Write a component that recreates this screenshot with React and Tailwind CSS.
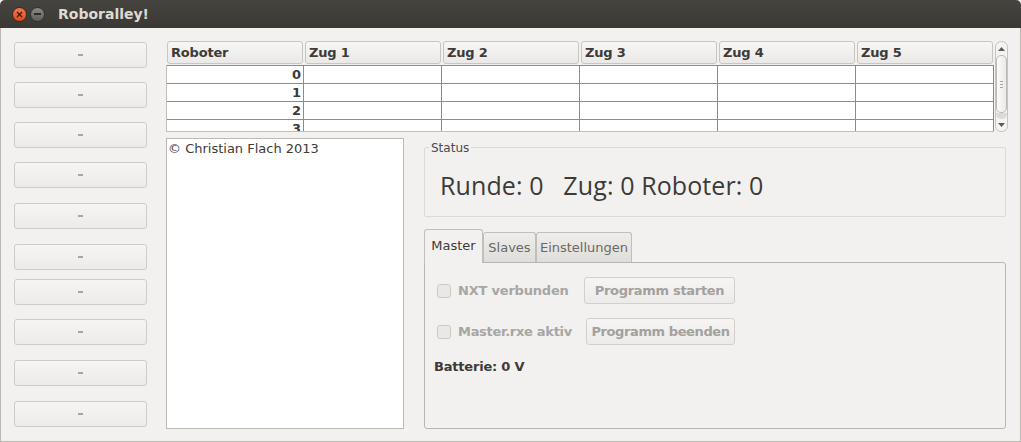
const ubuntu = { fontFamily: '"DejaVu Sans", "Open Sans", sans-serif' }

const leftGaps = ["mt-[1px]", "mt-[14px]", "mt-[14px]", "mt-[14px]", "mt-[15px]", "mt-[15px]", "mt-[9px]", "mt-[14px]", "mt-[15px]", "mt-[15px]"]

function SideButton({ cls }) {
  return (
    <div className={`${cls} h-[26px] w-[133px] rounded-[3px] border border-[#cfccc8] bg-gradient-to-b from-[#f6f5f4] to-[#ecebe9] flex items-center justify-center`}>
      <div className="w-[5px] h-[2px] bg-[#a8a4a0]" />
    </div>
  )
}

function Scrollbar() {
  return (
    <div className="w-[13px] h-[91px] ml-[1px] rounded-[6px] border border-[#c7c4c0] bg-[#f4f3f2] flex flex-col items-center">
      <div className="h-[13px] flex items-center justify-center">
        <svg width="7" height="4" viewBox="0 0 7 4"><path d="M0 4 L3.5 0 L7 4Z" fill="#5d5b58" /></svg>
      </div>
      <div className="w-[11px] h-[58px] rounded-[5px] border border-[#bdbab6] bg-gradient-to-r from-[#fbfbfa] to-[#ebeae8] flex flex-col items-center justify-center gap-[2px]">
        <div className="w-[3px] h-px bg-[#a6a39f]" />
        <div className="w-[3px] h-px bg-[#a6a39f]" />
        <div className="w-[3px] h-px bg-[#a6a39f]" />
      </div>
      <div className="flex-1 w-[11px] bg-[#dddad6] rounded-b-[5px]" />
      <div className="h-[12px] flex items-center justify-center">
        <svg width="7" height="4" viewBox="0 0 7 4"><path d="M0 0 L3.5 4 L7 0Z" fill="#5d5b58" /></svg>
      </div>
    </div>
  )
}

function Table() {
  const cols = ["Roboter", "Zug 1", "Zug 2", "Zug 3", "Zug 4", "Zug 5"]
  const rows = [0, 1, 2, 3]
  return (
    <div className="flex">
      <div className="w-[828px]">
        <div className="flex gap-[2px] pl-[1px] h-[23px]">
          {cols.map((c) => (
            <div key={c} className="w-[136px] h-[23px] rounded-[3px] border border-[#c9c6c2] bg-gradient-to-b from-[#f7f6f5] to-[#ebe9e7] px-[3px] flex items-center text-[13px] tracking-[-0.2px] font-bold text-[#3c3b37]" style={ubuntu}>
              {c}
            </div>
          ))}
        </div>
        <div className="mt-[1px] h-[67px] overflow-hidden border-l border-b border-[#c2bfbb] bg-white">
          {rows.map((r) => (
            <div key={r} className="flex h-[18px] border-t border-[#8e8c89]">
              <div className="w-[137px] border-r border-[#8e8c89] text-right pr-[2px] text-[13px] font-bold leading-[17px] text-[#3c3b37]" style={ubuntu}>{r}</div>
              {[1, 2, 3, 4, 5].map((z) => (
                <div key={z} className="w-[138px] border-r border-[#8e8c89]" />
              ))}
            </div>
          ))}
        </div>
      </div>
      <Scrollbar />
    </div>
  )
}

export default function App() {
  const comic = { fontFamily: '"DejaVu Sans", sans-serif' }
  return (
    <div className="w-[1021px] h-[442px] bg-[#f2f1f0] flex flex-col overflow-hidden">
      <div className="h-[28px] bg-gradient-to-b from-[#45443f] to-[#3a3935] rounded-t-[5px] flex items-center pl-[12px] shrink-0">
        <div className="w-[15px] h-[15px] rounded-full bg-gradient-to-b from-[#f7764a] to-[#df4b16] border border-[#3a2a22] flex items-center justify-center">
          <svg width="7" height="7" viewBox="0 0 7 7"><path d="M1 1 L6 6 M6 1 L1 6" stroke="#3a1f12" strokeWidth="1.4" /></svg>
        </div>
        <div className="ml-[3px] w-[15px] h-[15px] rounded-full bg-gradient-to-b from-[#8a8984] to-[#5e5d59] border border-[#33322e] flex items-center justify-center">
          <div className="w-[7px] h-[1.5px] bg-[#2e2d2a]" />
        </div>
        <span className="ml-[13px] text-[14px] font-bold text-[#dfdbd2]" style={ubuntu}>Roboralley!</span>
      </div>
      <div className="flex-1 flex border-x border-b border-[#bcb9b4] pt-[13px]">
        <div className="w-[165px] pl-[13px] flex flex-col shrink-0">
          {leftGaps.map((g, i) => (
            <SideButton key={i} cls={g} />
          ))}
        </div>
        <div className="flex-1 flex flex-col">
          <Table />
          <div className="flex mt-[6px]">
            <div className="w-[238px] h-[291px] bg-white border border-[#bdbab6] px-[1px] text-[13px] text-[#3c3b37] leading-[20px]" style={comic}>
              © Christian Flach 2013
            </div>
            <div className="ml-[20px] w-[582px] flex flex-col">
              <div className="mt-[9px] relative h-[70px] border border-[#dcdad6] rounded-[2px] flex items-center">
                <span className="absolute -top-[9px] left-[4px] bg-[#f2f1f0] px-[2px] text-[12px] text-[#4c4b47]" style={comic}>Status</span>
                <span className="ml-[15px] mt-[8px] text-[25px] tracking-[0.1px] text-[#3c3b37]" style={{ fontFamily: '"Open Sans", sans-serif' }}>Runde: 0&nbsp;&nbsp; Zug: 0 Roboter: 0</span>
              </div>
              <div className="mt-[11px] flex items-end h-[34px] text-[13px]" style={comic}>
                <div className="h-[34px] w-[59px] rounded-t-[3px] border border-b-0 border-[#c2bfbb] bg-[#f2f1f0] flex items-center justify-center text-[#3c3b37] relative z-10 -mb-px pb-[2px]">Master</div>
                <div className="h-[30px] w-[53px] rounded-t-[3px] border border-b-0 border-[#c2bfbb] bg-gradient-to-b from-[#eeedeb] to-[#e0deda] flex items-center justify-center text-[#6b6965]">Slaves</div>
                <div className="h-[30px] w-[96px] rounded-t-[3px] border border-b-0 border-[#c2bfbb] bg-gradient-to-b from-[#eeedeb] to-[#e0deda] flex items-center justify-center text-[#6b6965]">Einstellungen</div>
              </div>
              <div className="h-[167px] border border-[#b9b6b2] rounded-b-[3px] rounded-tr-[3px] px-[9px] pt-[14px]" style={ubuntu}>
                <div className="flex items-center h-[27px]">
                  <div className="ml-[3px] w-[14px] h-[14px] rounded-[3px] border border-[#cdcac6] bg-[#e9e8e6]" />
                  <span className="ml-[7px] w-[126px] text-[13px] tracking-[-0.2px] font-bold text-[#a8a6a2] whitespace-nowrap">NXT verbunden</span>
                  <div className="h-[27px] w-[151px] rounded-[3px] border border-[#d3d0cc] bg-gradient-to-b from-[#f6f5f4] to-[#ecebe9] flex items-center justify-center text-[13px] tracking-[-0.3px] font-bold text-[#a3a19d] whitespace-nowrap">Programm starten</div>
                </div>
                <div className="flex items-center h-[27px] mt-[14px]">
                  <div className="ml-[3px] w-[14px] h-[14px] rounded-[3px] border border-[#cdcac6] bg-[#e9e8e6]" />
                  <span className="ml-[7px] w-[128px] text-[13px] tracking-[-0.3px] font-bold text-[#a8a6a2] whitespace-nowrap">Master.rxe aktiv</span>
                  <div className="h-[27px] w-[149px] rounded-[3px] border border-[#d3d0cc] bg-gradient-to-b from-[#f6f5f4] to-[#ecebe9] flex items-center justify-center text-[13px] tracking-[-0.4px] font-bold text-[#a3a19d] whitespace-nowrap">Programm beenden</div>
                </div>
                <div className="mt-[12px] text-[13px] tracking-[-0.2px] font-bold text-[#3c3b37]">Batterie: 0 V</div>
              </div>
            </div>
          </div>
        </div>
      </div>
    </div>
  )
}
